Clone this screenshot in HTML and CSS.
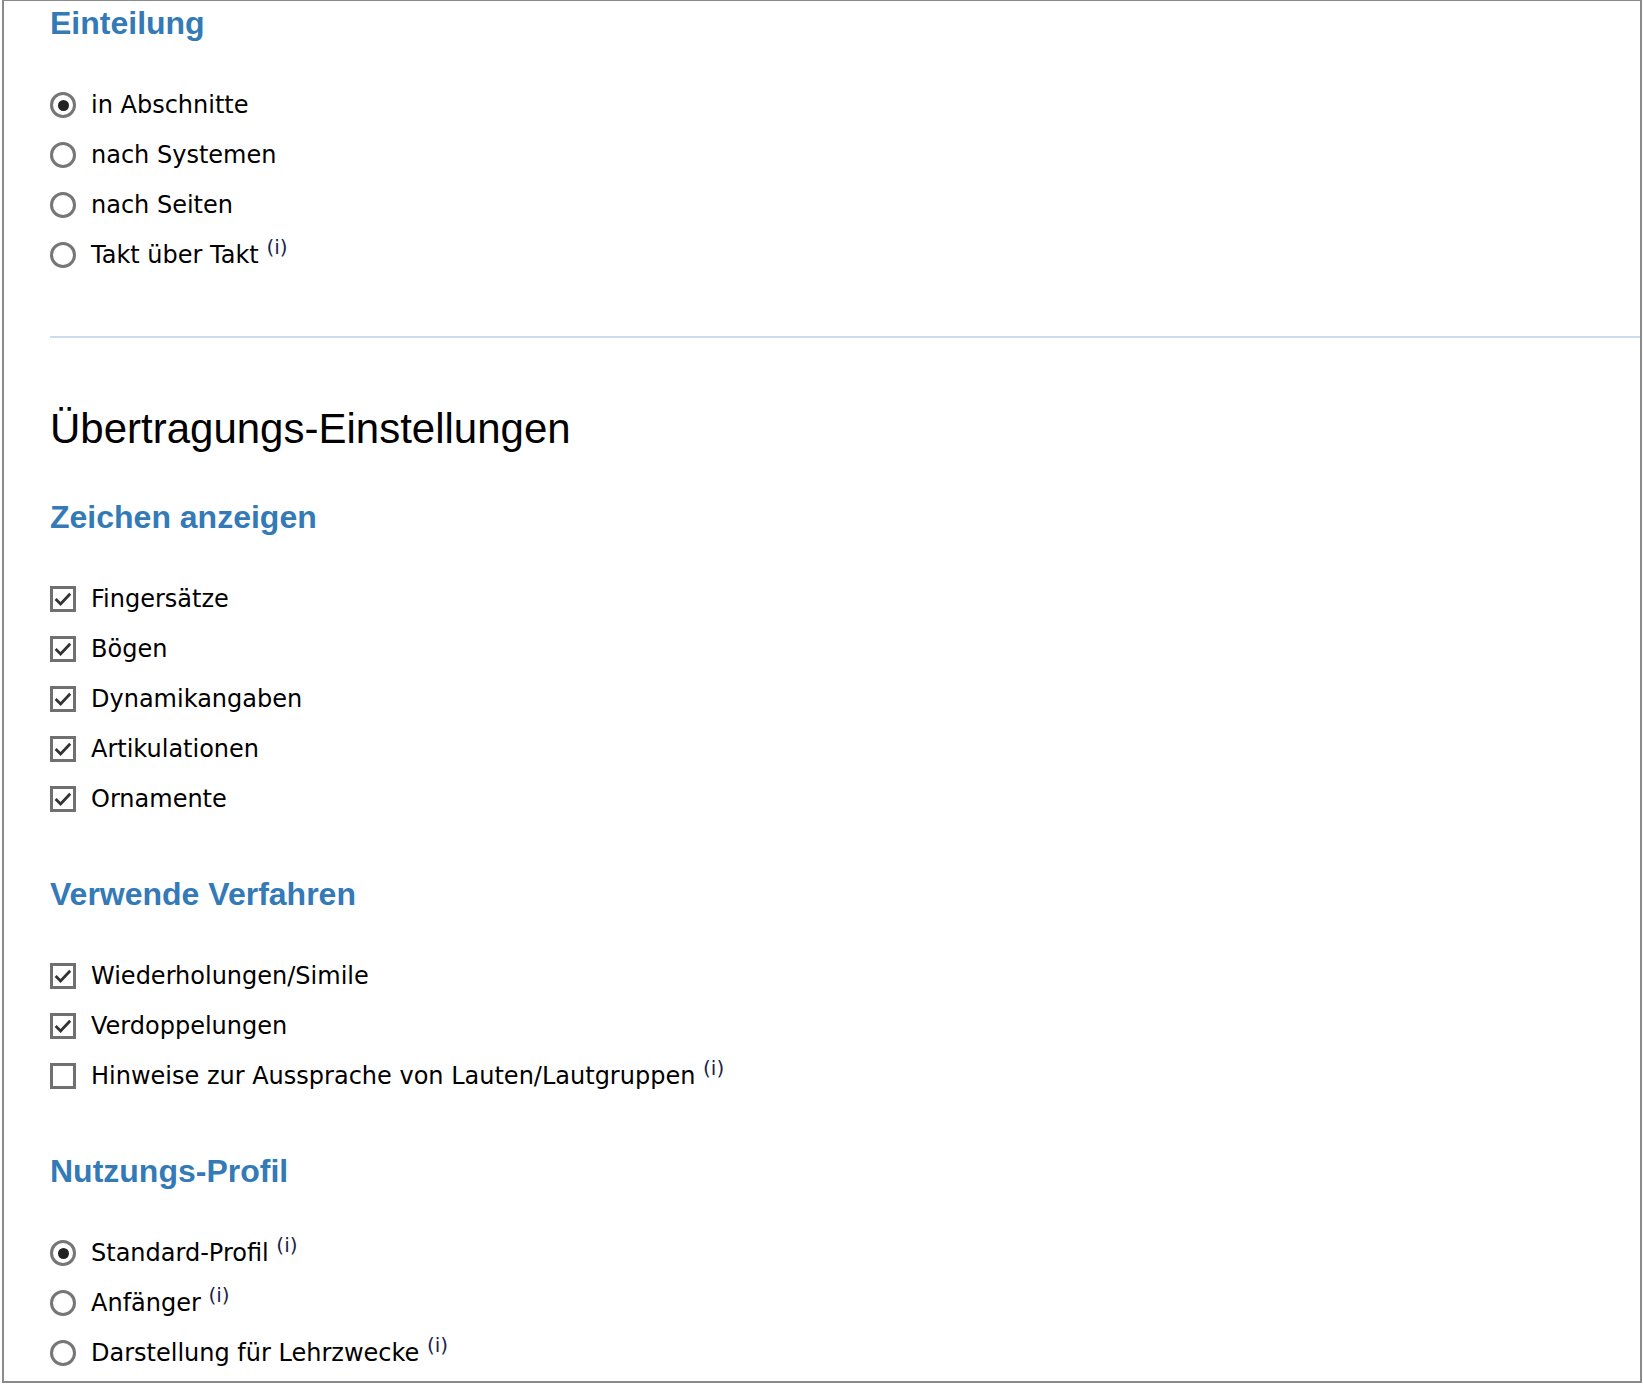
FILE: index.html
```html
<!DOCTYPE html>
<html lang="de">
<head>
<meta charset="utf-8">
<title>Übertragungs-Einstellungen</title>
<link rel="stylesheet" href="styles.css">
</head>
<body>
<div class="frame">
  <h3 class="section-title first">Einteilung</h3>
  <div class="options">
    <label class="option"><span class="radio checked"></span><span class="label-text">in Abschnitte</span></label>
    <label class="option"><span class="radio"></span><span class="label-text">nach Systemen</span></label>
    <label class="option"><span class="radio"></span><span class="label-text">nach Seiten</span></label>
    <label class="option"><span class="radio"></span><span class="label-text">Takt über Takt <sup class="info">(i)</sup></span></label>
  </div>

  <hr class="separator">

  <h2 class="page-title">Übertragungs-Einstellungen</h2>

  <h3 class="section-title">Zeichen anzeigen</h3>
  <div class="options">
    <label class="option"><span class="checkbox checked"><svg viewBox="0 0 20 20" width="20" height="20"><path d="M2.6 10 L7.6 15 L17.2 4.8" fill="none" stroke="#333" stroke-width="2.8"/></svg></span><span class="label-text">Fingersätze</span></label>
    <label class="option"><span class="checkbox checked"><svg viewBox="0 0 20 20" width="20" height="20"><path d="M2.6 10 L7.6 15 L17.2 4.8" fill="none" stroke="#333" stroke-width="2.8"/></svg></span><span class="label-text">Bögen</span></label>
    <label class="option"><span class="checkbox checked"><svg viewBox="0 0 20 20" width="20" height="20"><path d="M2.6 10 L7.6 15 L17.2 4.8" fill="none" stroke="#333" stroke-width="2.8"/></svg></span><span class="label-text">Dynamikangaben</span></label>
    <label class="option"><span class="checkbox checked"><svg viewBox="0 0 20 20" width="20" height="20"><path d="M2.6 10 L7.6 15 L17.2 4.8" fill="none" stroke="#333" stroke-width="2.8"/></svg></span><span class="label-text">Artikulationen</span></label>
    <label class="option"><span class="checkbox checked"><svg viewBox="0 0 20 20" width="20" height="20"><path d="M2.6 10 L7.6 15 L17.2 4.8" fill="none" stroke="#333" stroke-width="2.8"/></svg></span><span class="label-text">Ornamente</span></label>
  </div>

  <h3 class="section-title">Verwende Verfahren</h3>
  <div class="options">
    <label class="option"><span class="checkbox checked"><svg viewBox="0 0 20 20" width="20" height="20"><path d="M2.6 10 L7.6 15 L17.2 4.8" fill="none" stroke="#333" stroke-width="2.8"/></svg></span><span class="label-text">Wiederholungen/Simile</span></label>
    <label class="option"><span class="checkbox checked"><svg viewBox="0 0 20 20" width="20" height="20"><path d="M2.6 10 L7.6 15 L17.2 4.8" fill="none" stroke="#333" stroke-width="2.8"/></svg></span><span class="label-text">Verdoppelungen</span></label>
    <label class="option"><span class="checkbox"></span><span class="label-text">Hinweise zur Aussprache von Lauten/Lautgruppen <sup class="info">(i)</sup></span></label>
  </div>

  <h3 class="section-title">Nutzungs-Profil</h3>
  <div class="options">
    <label class="option"><span class="radio checked"></span><span class="label-text">Standard-Profil <sup class="info">(i)</sup></span></label>
    <label class="option"><span class="radio"></span><span class="label-text">Anfänger <sup class="info">(i)</sup></span></label>
    <label class="option"><span class="radio"></span><span class="label-text">Darstellung für Lehrzwecke <sup class="info">(i)</sup></span></label>
  </div>
</div>
</body>
</html>
```

FILE: styles.css
```css
html, body {
  margin: 0;
  padding: 0;
  background: #ffffff;
}

body {
  font-family: "DejaVu Sans", Verdana, sans-serif;
  color: #000;
}

.frame {
  box-sizing: border-box;
  margin-left: 2px;
  width: 1640px;
  height: 1383px;
  border: 2px solid #8a8a8a;
  border-top-width: 1px;
  padding: 4px 0 0 46px;
  overflow: hidden;
}

.section-title {
  font-family: "Liberation Sans", Arial, sans-serif;
  font-weight: bold;
  font-size: 32px;
  line-height: 36px;
  color: #337ab7;
  margin: 52px 0 39px 0;
}

.section-title.first {
  margin-top: 0;
}

.page-title + .section-title {
  margin-top: 46px;
}

.page-title {
  font-family: "Liberation Sans", Arial, sans-serif;
  font-weight: normal;
  font-size: 42px;
  line-height: 48px;
  color: #000;
  margin: 67px 0 0 0;
}

.options {
  display: flex;
  flex-direction: column;
}

.option {
  display: flex;
  align-items: center;
  height: 50px;
  gap: 15px;
  font-size: 24px;
  line-height: 28px;
}

.radio {
  box-sizing: border-box;
  width: 26px;
  height: 26px;
  border: 3px solid #767676;
  border-radius: 50%;
  display: flex;
  align-items: center;
  justify-content: center;
  flex: none;
}

.radio.checked::after {
  content: "";
  width: 11px;
  height: 11px;
  border-radius: 50%;
  background: #222;
}

.checkbox {
  box-sizing: border-box;
  width: 26px;
  height: 26px;
  border: 3px solid #707070;
  display: flex;
  align-items: center;
  justify-content: center;
  flex: none;
}

.checkbox svg {
  display: block;
}

.label-text {
  white-space: nowrap;
}

.info {
  font-size: 20px;
  line-height: 0;
  vertical-align: 9px;
  color: #1c2448;
}

.separator {
  border: none;
  height: 2px;
  background: #c8ddef;
  margin: 56px 0 0 0;
}
```
